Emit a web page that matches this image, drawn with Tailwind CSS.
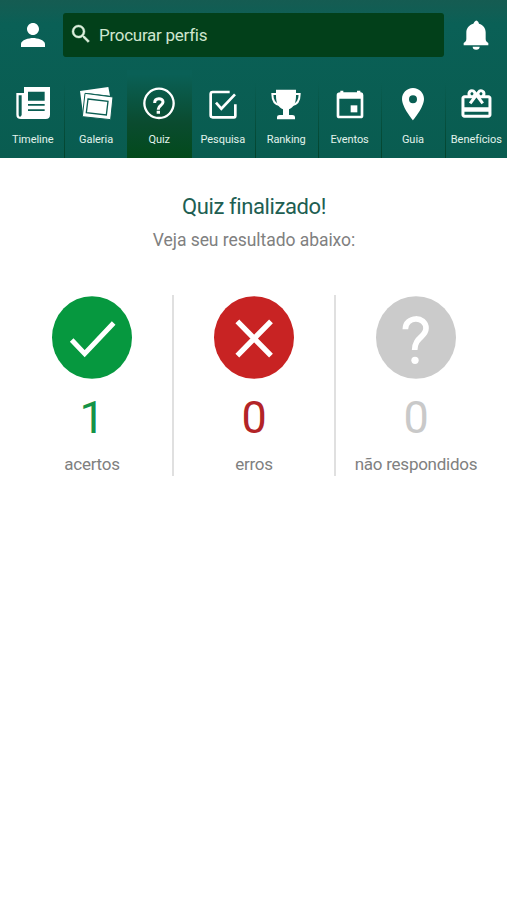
<!DOCTYPE html>
<html lang="pt-BR">
<head>
  <meta charset="UTF-8" />
  <title>Quiz finalizado</title>
  <script src="https://cdn.jsdelivr.net/npm/@tailwindcss/browser@4"></script>
</head>
<body class="bg-white font-['Roboto',sans-serif] w-[507px] h-[900px] overflow-hidden">

  <header class="h-[158px] bg-linear-to-b from-[#155c52] via-[#0a6056] via-15% to-[#095c50] flex flex-col">
    <!-- Search bar -->
    <div class="h-[70px] flex items-center">
      <button class="w-[63px] flex justify-center pl-0.5">
        <svg class="size-9" viewBox="0 0 24 24" fill="#fff"><path d="M12 12c2.21 0 4-1.79 4-4s-1.79-4-4-4-4 1.79-4 4 1.79 4 4 4zm0 2c-2.67 0-8 1.34-8 4v2h16v-2c0-2.66-5.33-4-8-4z"/></svg>
      </button>
      <div class="w-[381px] h-[44px] bg-[#02401a] rounded-[3px] flex items-center pl-1.5">
        <svg class="size-6 -mt-0.5" viewBox="0 0 24 24" fill="#dcefdc" stroke="#dcefdc" stroke-width=".4"><path d="M15.5 14h-.79l-.28-.27A6.470 6.470 0 0 0 16 9.500 6.500 6.500 0 1 0 9.500 16c1.610 0 3.090-.590 4.230-1.570l.27.28v.79l5 4.990L20.490 19l-4.990-5zm-6 0C7.010 14 5 11.990 5 9.500S7.010 5 9.500 5 14 7.010 14 9.500 11.990 14 9.500 14z"/></svg>
        <span class="ml-1.5 text-[17px] tracking-[-0.27px] leading-none text-[#cfe6cf]">Procurar perfis</span>
      </div>
      <button class="w-[63px] flex justify-center">
        <svg class="w-[28px] h-[32px]" viewBox="626 56 82 96" fill="#fff"><path d="M662 65q6-9 12 0l2 5c13 4 20 14 20 26v20c0 7 4 9 8 12v7h-74v-7c4-3 8-5 8-12V96c0-12 8-22 21-26zM657 139h21a10.500 9 0 0 1-21 0z"/></svg>
      </button>
    </div>

    <!-- Tabs -->
    <nav class="flex-1 grid grid-cols-8 text-[11px] leading-[13px] tracking-[-0.05px] text-[#e2f3ec]">
      <a class="flex flex-col items-center pt-[15px] gap-3 pl-0.5">
        <svg class="size-9" viewBox="44 30 108 108">
          <path fill="#fff" fill-rule="evenodd" d="M71 36h78v83q0 13-13 13H62q-14 0-14-13V54h23zM55 61v58q0 6 4 6t5-6V61zM83 50h50v27H83zM83 87h50v5H83zM83 103h50v5H83z"/>
        </svg>
        <span>Timeline</span>
      </a>
      <a class="relative flex flex-col items-center pt-[15px] gap-3 pl-0.5">
        <div class="absolute left-[1px] top-3 bottom-0 w-px bg-linear-to-b from-transparent to-[#03442d]"></div>
        <svg class="size-9" viewBox="235 30 108 108">
          <path fill="#fff" d="M241 48l85-12 5 26-70-8-6 68-4 1z"/>
          <path fill="#fff" stroke="#0a5d52" stroke-width="3" d="M256 55l84 11-7 68-85-9z"/>
          <path fill="#fff" stroke="#0a5d52" stroke-width="4" d="M265 72l60 7-5 41-60-7z"/>
        </svg>
        <span>Galeria</span>
      </a>
      <a class="flex flex-col items-center pt-[15px] gap-3 w-[65px] bg-linear-to-b from-[#0a6056] from-5% via-[#0a4b2f] via-60% to-[#034a1b]">
        <svg class="size-9" viewBox="50 30 108 108" fill="none" stroke="#fff">
          <circle cx="104" cy="85" r="44" stroke-width="7"/>
          <path stroke-width="9" d="M91 84c0-17 25-16 25-3 0 11-14 10-14 21v2M97 112h10"/>
        </svg>
        <span>Quiz</span>
      </a>
      <a class="flex flex-col items-center pt-[15px] gap-3 pl-0.5">
        <svg class="size-9" viewBox="241 30 108 108" fill="none" stroke="#fff" stroke-width="8">
          <path d="M315 51h-51q-6 0-6 6v64q0 6 6 6h64q4 0 4-5V88"/>
          <path d="M274 83l16 18 41-43"/>
        </svg>
        <span>Pesquisa</span>
      </a>
      <a class="relative flex flex-col items-center pt-[15px] gap-3 pl-0.5">
        <div class="absolute left-[1px] top-3 bottom-0 w-px bg-linear-to-b from-transparent to-[#03442d]"></div>
        <svg class="size-9" viewBox="56 30 108 108">
          <path fill="#fff" d="M80 44h60v19c0 22-8 34-21 40v17h10q8 0 8 6v7H83v-7q0-6 8-6h10v-17c-13-6-21-18-21-40z"/>
          <path fill="none" stroke="#fff" stroke-width="6" d="M84 57H69c0 18 6 32 24 34M136 57h15c0 18-6 32-24 34"/>
        </svg>
        <span>Ranking</span>
      </a>
      <a class="relative flex flex-col items-center pt-[15px] gap-3 pl-0.5">
        <div class="absolute left-[1px] top-3 bottom-0 w-px bg-linear-to-b from-transparent to-[#03442d]"></div>
        <svg class="size-9" viewBox="245 30 108 108" fill="#fff">
          <path fill-rule="evenodd" d="M270 47h9v5h41v-5h10v5h2q7 1 7 8v62q0 8-8 8h-64q-8 0-8-8V60q0-8 11-8zM267 71v51h64V71z"/>
          <path d="M301 91h20v21h-20z"/>
        </svg>
        <span>Eventos</span>
      </a>
      <a class="relative flex flex-col items-center pt-[15px] gap-3 pl-0.5">
        <div class="absolute left-[1px] top-3 bottom-0 w-px bg-linear-to-b from-transparent to-[#03442d]"></div>
        <svg class="size-9" viewBox="54 30 108 108" fill="#fff">
          <path fill-rule="evenodd" d="M108 39c-19 0-33 15-33 33 0 25 33 64 33 64s33-39 33-64c0-18-14-33-33-33zm0 22a12 12 0 1 1 0 24 12 12 0 0 1 0-24z"/>
        </svg>
        <span>Guia</span>
      </a>
      <a class="relative flex flex-col items-center pt-[15px] gap-3 pl-0.5">
        <div class="absolute left-[1px] top-3 bottom-0 w-px bg-linear-to-b from-transparent to-[#03442d]"></div>
        <svg class="size-9" viewBox="-0.3 -0.9 24 24" fill="#fff"><path d="M20 6h-2.180c.11-.31.18-.65.18-1a2.996 2.996 0 0 0-5.500-1.650l-.5.67-.5-.68C10.960 2.540 10.050 2 9 2 7.340 2 6 3.340 6 5c0 .35.07.69.18 1H4c-1.110 0-1.990.89-1.990 2L2 19c0 1.110.89 2 2 2h16c1.110 0 2-.89 2-2V8c0-1.110-.89-2-2-2zm-5-2c.55 0 1 .45 1 1s-.45 1-1 1-1-.45-1-1 .45-1 1-1zM9 4c.55 0 1 .45 1 1s-.45 1-1 1-1-.45-1-1 .45-1 1-1zm11 15H4v-2h16v2zm0-5H4V8h5.080L7 10.830 8.620 12 11 8.760l1-1.360 1 1.360L15.380 12 17 10.830 14.920 8H20v6z"/></svg>
        <span>Benefícios</span>
      </a>
    </nav>
  </header>

  <main class="text-center text-[#808080]">
    <h1 class="pt-[36px] pl-px text-[22px] tracking-[-0.4px] leading-[26px] text-[#205e52]">Quiz finalizado!</h1>
    <p class="mt-[10px] pl-px text-[17.5px] tracking-[-0.05px] leading-5">Veja seu resultado abaixo:</p>

    <!-- Results -->
    <section class="mt-[45px] ml-3 w-[486px] h-[181px] grid grid-cols-3 text-[17px] tracking-[-0.25px]">
      <div class="flex flex-col items-center border-r-2 border-[#e0e0e0]">
        <svg class="w-[80px] h-[83px] mt-px" viewBox="66 48 240 249">
          <ellipse cx="186" cy="172.500" rx="120" ry="124" fill="#06983f"/>
          <path fill="none" stroke="#fff" stroke-width="15" d="M125 180l39 41 87-92"/>
        </svg>
        <span class="mt-[12px] text-[45px] leading-[54px] text-[#149347]">1</span>
        <span class="mt-[9px] leading-5">acertos</span>
      </div>
      <div class="flex flex-col items-center border-r-2 border-[#e0e0e0]">
        <svg class="w-[80px] h-[83px] mt-px" viewBox="66 48 240 249">
          <ellipse cx="186" cy="172.500" rx="120" ry="124" fill="#c82323"/>
          <path fill="none" stroke="#fff" stroke-width="16" d="M136 124l101 103M237 124L136 227"/>
        </svg>
        <span class="mt-[12px] text-[45px] leading-[54px] text-[#b32427]">0</span>
        <span class="mt-[9px] leading-5">erros</span>
      </div>
      <div class="flex flex-col items-center pr-0.5">
        <svg class="w-[80px] h-[83px] mt-px" viewBox="348 48 240 249">
          <ellipse cx="468" cy="172.500" rx="120" ry="124" fill="#cbcbcb"/>
          <path fill="none" stroke="#fff" stroke-width="17" d="M436 148c0-41 62-41 62-3 0 27-34 26-34 65"/>
          <circle cx="465" cy="241" r="11" fill="#fff"/>
        </svg>
        <span class="mt-[12px] text-[45px] leading-[54px] text-[#c9c9c9]">0</span>
        <span class="mt-[9px] leading-5 whitespace-nowrap">não respondidos</span>
      </div>
    </section>
  </main>

</body>
</html>
